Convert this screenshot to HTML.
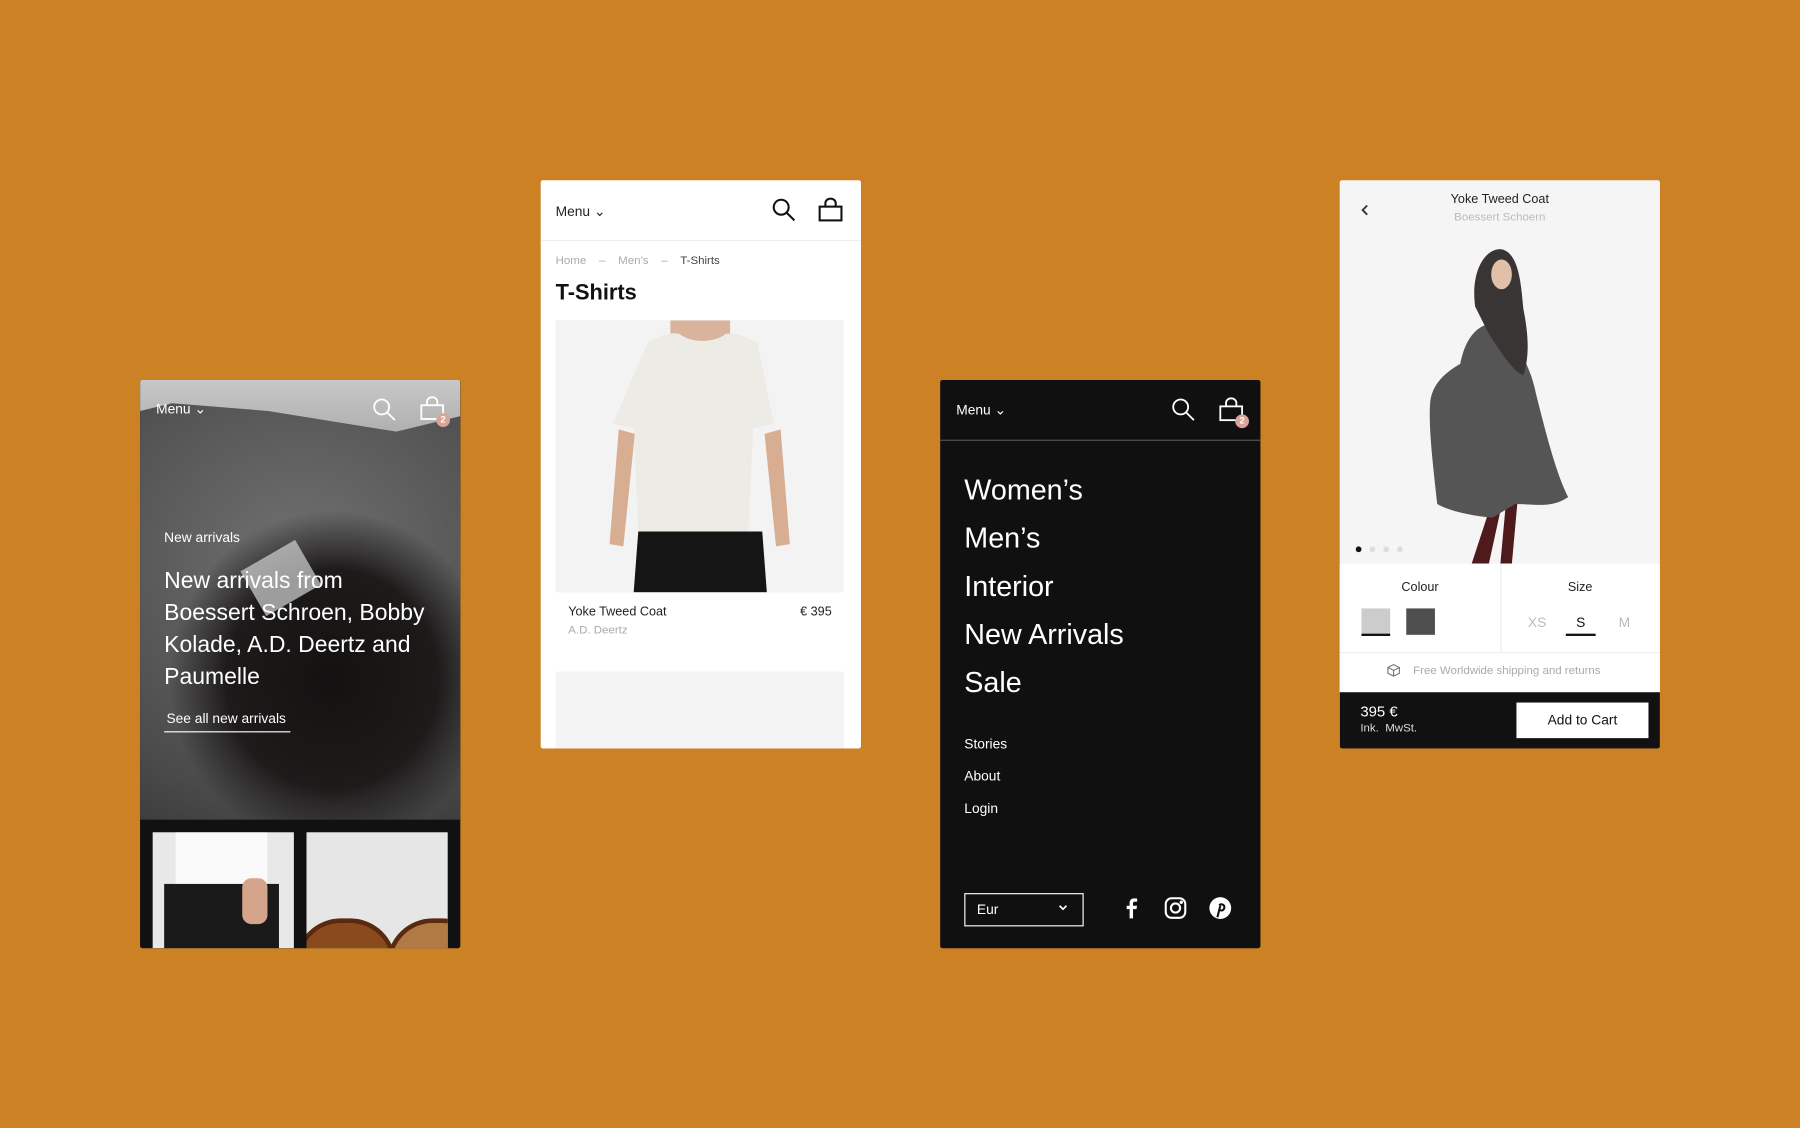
<!DOCTYPE html>
<html><head><meta charset="utf-8"><style>
html,body{margin:0;padding:0;width:1800px;height:1128px;overflow:hidden;background:#cc8125;font-family:"Liberation Sans",sans-serif}
#w{position:absolute;left:0;top:0;width:1568px;height:983px;transform:scale(1.14796);transform-origin:0 0}
.a{position:absolute}
.card{position:absolute;width:279px;height:495px;overflow:hidden;border-radius:2px}
.t{position:absolute;white-space:nowrap;line-height:1}
</style></head><body><div id="w">

<!-- card 1 -->
<div class="card" style="left:122px;top:331px;background:#111">
  <div class="a" style="left:0;top:0;width:279px;height:383px;background:radial-gradient(ellipse 60% 45% at 60% 68%,#141111 0%,#1d1a1a 55%,rgba(30,28,28,0) 85%),radial-gradient(ellipse 120% 80% at 50% 40%,#707070,#4a4a4a 70%,#333);"></div>
  <div class="a" style="left:0;top:0;width:279px;height:45px;background:linear-gradient(#c8c8c8,#b0b0b0);clip-path:polygon(0 0,100% 0,100% 70%,80% 100%,40% 60%,10% 45%,0 60%)"></div>
  <div class="a" style="left:95px;top:150px;width:55px;height:45px;background:#c9c9c9;transform:rotate(-30deg);opacity:.75"></div>
  <div class="t" style="left:14px;top:19px;color:#fff;font-size:12px">Menu ⌄</div>
  <svg class="a" style="left:202px;top:15px" width="22" height="22" viewBox="0 0 22 22" fill="none" stroke="#fff" stroke-width="1.6"><circle cx="8.5" cy="8.5" r="6.5"/><path d="M13 13l7 7"/></svg>
  <svg class="a" style="left:244px;top:14px" width="22" height="22" viewBox="0 0 22 22" fill="none" stroke="#fff" stroke-width="1.6"><rect x="1" y="8" width="19" height="12"/><path d="M6 8V5a4.5 4 0 0 1 9 0v3"/></svg>
  <div class="a" style="left:258px;top:29px;width:12px;height:12px;border-radius:6px;background:#d9a39a;color:#fff;font-size:8px;text-align:center;line-height:12px;font-weight:bold">2</div>
  <div class="t" style="left:21px;top:131px;color:#fff;font-size:12px">New arrivals</div>
  <div class="a" style="left:21px;top:161px;color:#fff;font-size:20px;line-height:28px;width:258px;white-space:nowrap">New arrivals from<br>Boessert Schroen, Bobby<br>Kolade, A.D. Deertz and<br>Paumelle</div>
  <div class="t" style="left:23px;top:289px;color:#fff;font-size:12px">See all new arrivals</div>
  <div class="a" style="left:21px;top:306px;width:110px;height:1px;background:#fff"></div>
  <div class="a" style="left:11px;top:394px;width:123px;height:101px;background:#e8e8e8;overflow:hidden">
    <div class="a" style="left:20px;top:0;width:80px;height:50px;background:#fafafa"></div>
    <div class="a" style="left:10px;top:45px;width:100px;height:60px;background:#1a1a1a"></div>
    <div class="a" style="left:78px;top:40px;width:22px;height:40px;background:#d4a58a;border-radius:8px"></div>
  </div>
  <div class="a" style="left:145px;top:394px;width:123px;height:101px;background:#e6e6e6;overflow:hidden">
    <div class="a" style="left:-10px;top:75px;width:80px;height:50px;border-radius:40px 40px 0 0;background:#8a4a1e;border:4px solid #5a2a10"></div>
    <div class="a" style="left:70px;top:75px;width:80px;height:50px;border-radius:40px 40px 0 0;background:#b07a45;border:4px solid #5a2a10"></div>
  </div>
</div>

<!-- card 2 -->
<div class="card" style="left:471px;top:157px;background:#fff">
  <div class="t" style="left:13px;top:21px;color:#222;font-size:12px">Menu ⌄</div>
  <svg class="a" style="left:201px;top:15px" width="22" height="22" viewBox="0 0 22 22" fill="none" stroke="#111" stroke-width="1.8"><circle cx="8.5" cy="8.5" r="6.5"/><path d="M13 13l7 7"/></svg>
  <svg class="a" style="left:242px;top:15px" width="22" height="22" viewBox="0 0 22 22" fill="none" stroke="#111" stroke-width="1.8"><rect x="1" y="8" width="19" height="12"/><path d="M6 8V5a4.5 4 0 0 1 9 0v3"/></svg>
  <div class="a" style="left:0;top:52px;width:279px;height:1px;background:#eee"></div>
  <div class="t" style="left:13px;top:66px;font-size:10px;color:#aaa">Home &nbsp;&nbsp; – &nbsp;&nbsp; Men’s &nbsp;&nbsp; – &nbsp;&nbsp; <span style="color:#444">T-Shirts</span></div>
  <div class="t" style="left:13px;top:89px;font-size:19px;color:#111;font-weight:bold">T-Shirts</div>
  <div class="a" style="left:13px;top:122px;width:251px;height:237px;background:#f4f3f3;overflow:hidden">
    <svg class="a" style="left:0;top:0" width="251" height="237" viewBox="0 0 251 237">
      <path d="M100 0h52v15c-8 10-44 10-52 0z" fill="#d9b39b"/>
      <path d="M80 20c12-8 22-10 28-8 10 8 30 8 40 0 8-2 18 2 28 8l14 70-18 4-4 90H72l-4-90-18-4z" fill="#ecebe6"/>
      <path d="M55 95l-8 100 12 2 10-98zM196 95l8 100-12 2-10-98z" fill="#d8ae92"/>
      <path d="M72 184h108l4 53H68z" fill="#151515"/>
    </svg>
  </div>
  <div class="t" style="left:24px;top:371px;font-size:11px;color:#222">Yoke Tweed Coat</div>
  <div class="t" style="left:226px;top:371px;font-size:11px;color:#222">€ 395</div>
  <div class="t" style="left:24px;top:388px;font-size:10px;color:#aaa">A.D. Deertz</div>
  <div class="a" style="left:13px;top:428px;width:251px;height:80px;background:#f4f4f4"></div>
</div>

<!-- card 3 -->
<div class="card" style="left:819px;top:331px;background:#101010">
  <div class="t" style="left:14px;top:20px;color:#fff;font-size:12px">Menu ⌄</div>
  <svg class="a" style="left:201px;top:15px" width="22" height="22" viewBox="0 0 22 22" fill="none" stroke="#fff" stroke-width="1.6"><circle cx="8.5" cy="8.5" r="6.5"/><path d="M13 13l7 7"/></svg>
  <svg class="a" style="left:243px;top:15px" width="22" height="22" viewBox="0 0 22 22" fill="none" stroke="#fff" stroke-width="1.6"><rect x="1" y="8" width="19" height="12"/><path d="M6 8V5a4.5 4 0 0 1 9 0v3"/></svg>
  <div class="a" style="left:257px;top:30px;width:12px;height:12px;border-radius:6px;background:#d9a39a;color:#fff;font-size:8px;text-align:center;line-height:12px;font-weight:bold">2</div>
  <div class="a" style="left:0;top:52px;width:279px;height:1px;background:#555"></div>
  <div class="a" style="left:21px;top:75px;color:#fff;font-size:25px;line-height:42px">Women’s<br>Men’s<br>Interior<br>New Arrivals<br>Sale</div>
  <div class="a" style="left:21px;top:303px;color:#fff;font-size:12px;line-height:28px">Stories<br>About<br>Login</div>
  <div class="a" style="left:21px;top:447px;width:102px;height:27px;border:1px solid #fff"></div>
  <div class="t" style="left:32px;top:455px;color:#fff;font-size:12px">Eur</div>
  <svg class="a" style="left:102px;top:455px" width="10" height="10" viewBox="0 0 10 10" fill="none" stroke="#fff" stroke-width="1.5"><path d="M2 3l3 3 3-3"/></svg>
  <svg class="a" style="left:157px;top:450px" width="20" height="20" viewBox="0 0 20 20" fill="#fff"><path d="M11 19v-8h3l.5-3H11V6c0-1 .4-1.6 1.6-1.6H14.6V1.8C14 1.7 13 1.6 12 1.6 9.6 1.6 8 3 8 5.7V8H5.5v3H8v8z"/></svg>
  <svg class="a" style="left:195px;top:450px" width="20" height="20" viewBox="0 0 20 20" fill="none" stroke="#fff" stroke-width="1.8"><rect x="1.5" y="1.5" width="17" height="17" rx="5"/><circle cx="10" cy="10" r="4"/><circle cx="15" cy="5" r=".6" fill="#fff"/></svg>
  <svg class="a" style="left:234px;top:450px" width="20" height="20" viewBox="0 0 20 20"><circle cx="10" cy="10" r="9.5" fill="#fff"/><path d="M9 7.5c2-1.5 5-.5 4.5 2.3-.4 2.4-3 3-4 1.5M10 8l-2.5 10" fill="none" stroke="#101010" stroke-width="1.8"/></svg>
</div>

<!-- card 4 -->
<div class="card" style="left:1167px;top:157px;background:#f5f5f5">
  <svg class="a" style="left:18px;top:20px" width="8" height="12" viewBox="0 0 8 12" fill="none" stroke="#333" stroke-width="1.6"><path d="M6 2L2 6l4 4"/></svg>
  <div class="t" style="left:0;width:279px;text-align:center;top:12px;font-size:11px;color:#222">Yoke Tweed Coat</div>
  <div class="t" style="left:0;width:279px;text-align:center;top:28px;font-size:10px;color:#bbb">Boessert Schoern</div>
  <svg class="a" style="left:0;top:50px" width="279" height="284" viewBox="0 0 279 284">
    <path d="M115 284l18-55 9 0-12 55zM140 284l5-55 10 0-5 55z" fill="#4e1a1c"/>
    <path d="M105 110c4-20 12-30 22-34 22 6 38 30 44 60 10 40 18 70 28 90-14 10-30 6-46 6l-20 12c-20-2-38-6-48-12-4-36-8-70-6-90 2-14 12-24 26-32z" fill="#555"/>
    <path d="M118 60c-4-30 8-50 22-50 16 2 18 30 20 52 4 20 6 40 0 58-10-4-22-24-30-36z" fill="#3a3535"/>
    <ellipse cx="141" cy="32" rx="9" ry="13" fill="#e2bfa8"/>
  </svg>
  <div class="a" style="left:14px;top:319px;width:5px;height:5px;border-radius:3px;background:#111"></div>
  <div class="a" style="left:26px;top:319px;width:5px;height:5px;border-radius:3px;background:#ddd"></div>
  <div class="a" style="left:38px;top:319px;width:5px;height:5px;border-radius:3px;background:#ddd"></div>
  <div class="a" style="left:50px;top:319px;width:5px;height:5px;border-radius:3px;background:#ddd"></div>
  <div class="a" style="left:0;top:334px;width:279px;height:112px;background:#fff"></div>
  <div class="a" style="left:140px;top:334px;width:1px;height:77px;background:#eee"></div>
  <div class="a" style="left:0;top:411px;width:279px;height:1px;background:#eee"></div>
  <div class="t" style="left:0;width:140px;text-align:center;top:350px;font-size:11px;color:#222">Colour</div>
  <div class="t" style="left:140px;width:139px;text-align:center;top:350px;font-size:11px;color:#222">Size</div>
  <div class="a" style="left:19px;top:373px;width:25px;height:22px;background:#ccc;border-bottom:2px solid #111"></div>
  <div class="a" style="left:58px;top:373px;width:25px;height:23px;background:#4f4f4f"></div>
  <div class="t" style="left:164px;top:379px;font-size:12px;color:#bbb">XS</div>
  <div class="t" style="left:206px;top:379px;font-size:12px;color:#111">S</div>
  <div class="a" style="left:197px;top:395px;width:26px;height:2px;background:#111"></div>
  <div class="t" style="left:243px;top:379px;font-size:12px;color:#bbb">M</div>
  <svg class="a" style="left:41px;top:421px" width="12" height="12" viewBox="0 0 12 12" fill="none" stroke="#777" stroke-width="1"><path d="M6 1l5 2.5v5L6 11 1 8.5v-5zM1 3.5L6 6l5-2.5M6 6v5"/></svg>
  <div class="t" style="left:64px;top:423px;font-size:10px;color:#aaa">Free Worldwide shipping and returns</div>
  <div class="a" style="left:0;top:446px;width:279px;height:49px;background:#111"></div>
  <div class="t" style="left:18px;top:456px;font-size:13px;color:#fff">395 €</div>
  <div class="t" style="left:18px;top:473px;font-size:10px;color:#ddd">Ink.&nbsp; MwSt.</div>
  <div class="a" style="left:154px;top:455px;width:115px;height:31px;background:#fff;text-align:center;line-height:31px;font-size:12px;color:#111">Add to Cart</div>
</div>

</div></body></html>
